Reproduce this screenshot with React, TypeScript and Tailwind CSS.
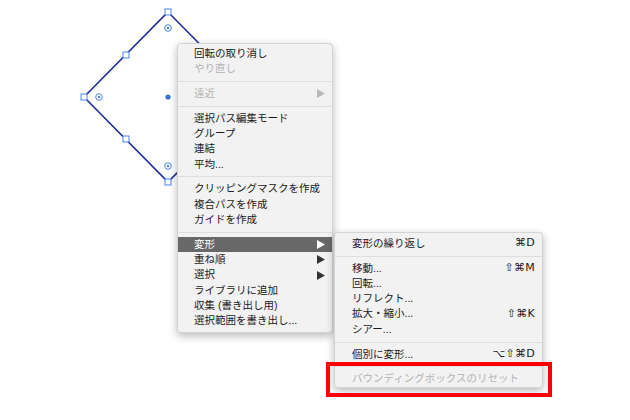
import React from 'react'

type Item =
  | { sep: true }
  | {
      sep?: false
      label: string
      disabled?: boolean
      arrow?: boolean
      active?: boolean
      shortcut?: string
    }

const mainItems: Item[] = [
  { label: '回転の取り消し' },
  { label: 'やり直し', disabled: true },
  { sep: true },
  { label: '遠近', disabled: true, arrow: true },
  { sep: true },
  { label: '選択パス編集モード' },
  { label: 'グループ' },
  { label: '連結' },
  { label: '平均...' },
  { sep: true },
  { label: 'クリッピングマスクを作成' },
  { label: '複合パスを作成' },
  { label: 'ガイドを作成' },
  { sep: true },
  { label: '変形', arrow: true, active: true },
  { label: '重ね順', arrow: true },
  { label: '選択', arrow: true },
  { label: 'ライブラリに追加' },
  { label: '収集 (書き出し用)' },
  { label: '選択範囲を書き出し...' },
]

const subItems: Item[] = [
  { label: '変形の繰り返し', shortcut: '⌘D' },
  { sep: true },
  { label: '移動...', shortcut: '⇧⌘M' },
  { label: '回転...' },
  { label: 'リフレクト...' },
  { label: '拡大・縮小...', shortcut: '⇧⌘K' },
  { label: 'シアー...' },
  { sep: true },
  { label: '個別に変形...', shortcut: '⌥⇧⌘D' },
  { sep: true },
  { label: 'バウンディングボックスのリセット', disabled: true },
]

function Arrow({ color }: { color: string }) {
  return (
    <svg width="8" height="9" viewBox="0 0 8 9" className="shrink-0">
      <path d="M0 0 L8 4.5 L0 9 Z" fill={color} />
    </svg>
  )
}

function MenuList({ items, padLeft }: { items: Item[]; padLeft: string }) {
  return (
    <>
      {items.map((it, i) => {
        if (it.sep) {
          return (
            <div key={i} className="h-[9.5px] flex items-center">
              <div className="h-px w-full bg-[#dedede]" />
            </div>
          )
        }
        const color = it.active ? 'text-white' : it.disabled ? 'text-[#b3b3b3]' : 'text-[#1a1a1a]'
        return (
          <div
            key={i}
            className={`h-[15.3px] flex items-center justify-between ${padLeft} pr-[7px] ${color} ${
              it.active ? 'bg-[#686868]' : ''
            }`}
          >
            <span className="whitespace-nowrap">{it.label}</span>
            {it.arrow && (
              <Arrow color={it.active ? '#ffffff' : it.disabled ? '#b8b8b8' : '#333333'} />
            )}
            {it.shortcut && (
              <span className="font-['DejaVu_Sans',sans-serif] text-[11px] tracking-[0.3px]">
                {it.shortcut}
              </span>
            )}
          </div>
        )
      })}
    </>
  )
}

function Shape() {
  const blue = '#1c2f9c'
  const light = '#4d82e6'
  const squares = [
    [168, 12],
    [84, 97],
    [168, 182],
    [252, 97],
    [126, 55],
    [126, 139],
    [210, 55],
    [210, 139],
  ]
  const rings = [
    [168, 28],
    [99, 97],
    [168, 166],
  ]
  return (
    <svg className="absolute inset-0" width="630" height="420" viewBox="0 0 630 420">
      <path d="M168 12 L252 97 L168 182 L84 97 Z" fill="none" stroke={blue} strokeWidth="1.6" />
      {squares.map(([x, y], i) => (
        <rect key={i} x={x - 3} y={y - 3} width="6" height="6" fill="#ffffff" stroke={light} strokeWidth="1" />
      ))}
      {rings.map(([x, y], i) => (
        <g key={i}>
          <circle cx={x} cy={y} r="3.3" fill="#ffffff" stroke={light} strokeWidth="1" />
          <circle cx={x} cy={y} r="1.2" fill={light} />
        </g>
      ))}
      <circle cx="168" cy="97" r="2.6" fill="#3b6fe0" />
    </svg>
  )
}

export default function App() {
  return (
    <div className="relative w-[630px] h-[420px] overflow-hidden bg-white font-['Liberation_Sans','Noto_Sans_CJK_JP',sans-serif] text-[10.5px]">
      <Shape />

      {/* main context menu */}
      <div className="absolute left-[177px] top-[43px] w-[156px] pt-[2px] pb-[3px] bg-[#f2f2f2] border border-[#d4d4d4] rounded-[4px] shadow-[0_3px_8px_rgba(0,0,0,0.28)]">
        <MenuList items={mainItems} padLeft="pl-[16px]" />
      </div>

      {/* transform submenu */}
      <div className="absolute left-[334px] top-[232px] w-[209px] pt-[3px] pb-0 bg-[#f2f2f2] border border-[#d4d4d4] rounded-[4px] shadow-[0_3px_8px_rgba(0,0,0,0.28)]">
        <MenuList items={subItems} padLeft="pl-[17px]" />
      </div>

      {/* highlight box */}
      <div className="absolute left-[326px] top-[362px] w-[226px] h-[35px] border-4 border-[#ff0000]" />
    </div>
  )
}
